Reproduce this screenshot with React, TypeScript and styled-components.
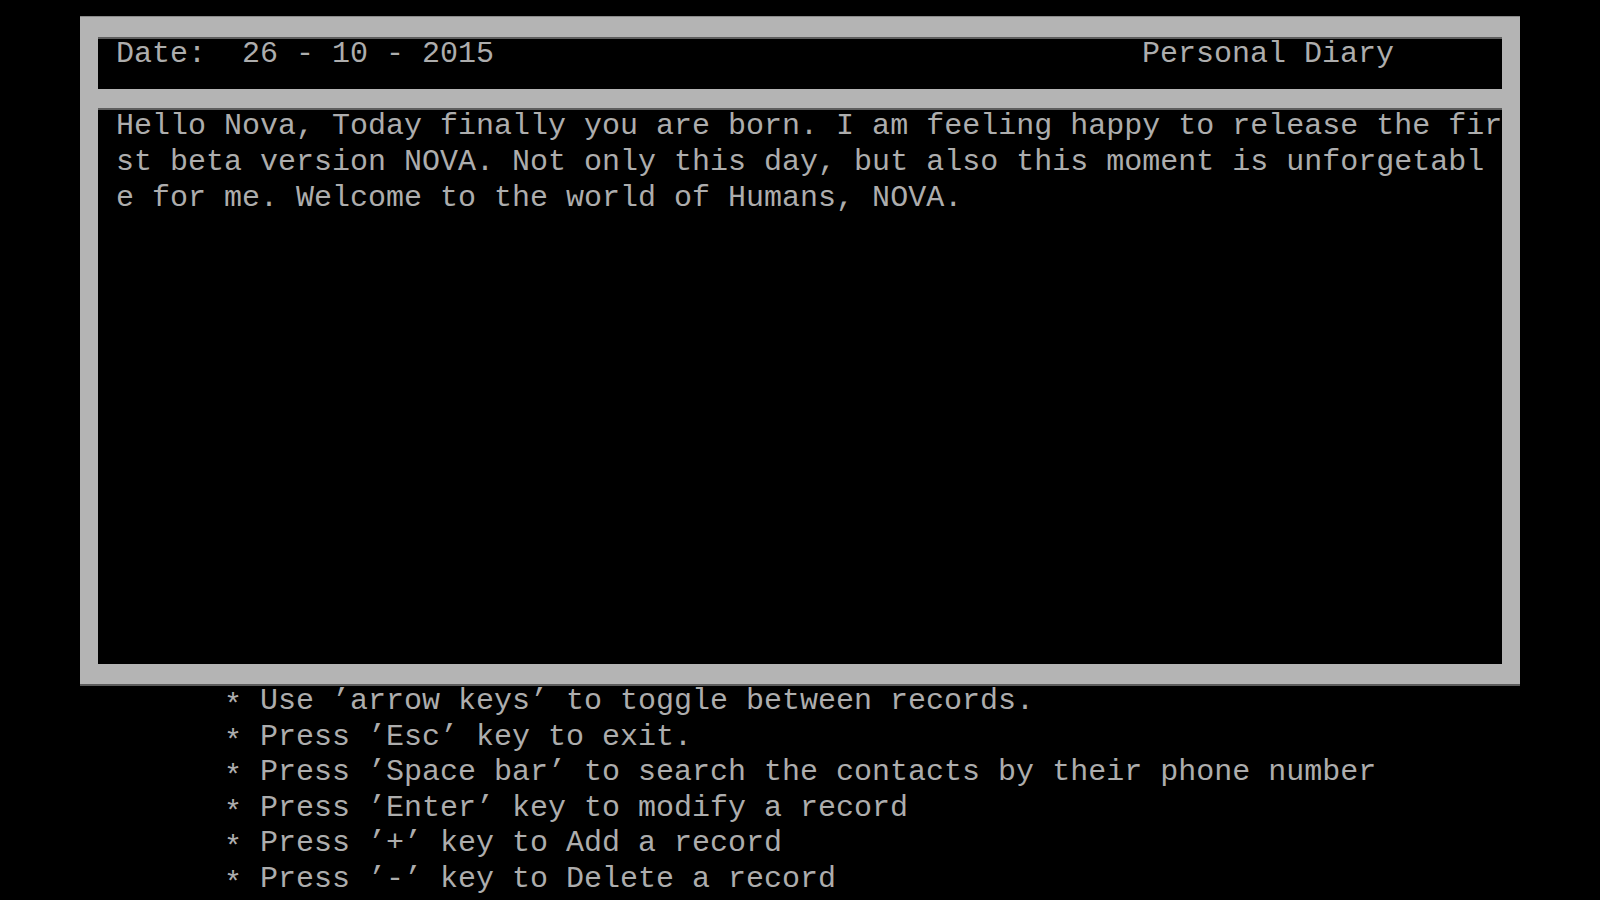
import styled, { createGlobalStyle } from "styled-components";

const GlobalStyle = createGlobalStyle`
  html, body {
    margin: 0;
    padding: 0;
    background: #000;
  }
  body {
    font-family: "Liberation Mono", "DejaVu Sans Mono", monospace;
    font-size: 30px;
    line-height: 36px;
    color: #adadad;
  }
`;

const Screen = styled.div`
  width: 1440px;
  height: 900px;
  margin: 0 auto;
  padding-top: 16px;
  box-sizing: border-box;
  overflow: hidden;
`;

const Frame = styled.div`
  display: flex;
  flex-direction: column;
  gap: 19px;
  padding: 20px 18px;
  background: #b4b4b4;
  border-top: 1px solid #8a8a8a;
  border-bottom: 2px solid #5c5c5c;
`;

const HeaderBox = styled.div`
  display: flex;
  justify-content: space-between;
  height: 52px;
  box-sizing: border-box;
  padding: 0 108px 0 18px;
  background: #000;
  border-top: 2px solid #5e5e5e;
  white-space: pre;
`;

const HeaderText = styled.span`
  margin-top: -3px;
`;

const PageBox = styled.div`
  height: 556px;
  box-sizing: border-box;
  padding: 0 18px;
  background: #000;
  border-top: 2px solid #5e5e5e;
`;

const TextLine = styled.div`
  height: 36px;
  white-space: pre;
  &:first-child {
    margin-top: -2px;
  }
`;

const HelpList = styled.ul`
  list-style: none;
  margin: -2px 0 0;
  padding: 0 0 0 144px;
`;

const HelpItem = styled.li`
  height: 35.5px;
  line-height: 35.5px;
  white-space: pre;
`;

const Bullet = styled.span`
  display: inline-block;
  width: 36px;
  vertical-align: -5px;
`;

const bodyLines = [
  "Hello Nova, Today finally you are born. I am feeling happy to release the fir",
  "st beta version NOVA. Not only this day, but also this moment is unforgetabl",
  "e for me. Welcome to the world of Humans, NOVA.",
];

const helpLines = [
  "Use ’arrow keys’ to toggle between records.",
  "Press ’Esc’ key to exit.",
  "Press ’Space bar’ to search the contacts by their phone number",
  "Press ’Enter’ key to modify a record",
  "Press ’+’ key to Add a record",
  "Press ’-’ key to Delete a record",
];

export default function App() {
  return (
    <>
      <GlobalStyle />
      <Screen>
        <Frame>
          <HeaderBox>
            <HeaderText>Date:  26 - 10 - 2015</HeaderText>
            <HeaderText>Personal Diary</HeaderText>
          </HeaderBox>
          <PageBox>
            {bodyLines.map((line) => (
              <TextLine key={line}>{line}</TextLine>
            ))}
          </PageBox>
        </Frame>
        <HelpList>
          {helpLines.map((line) => (
            <HelpItem key={line}>
              <Bullet>*</Bullet>
              {line}
            </HelpItem>
          ))}
        </HelpList>
      </Screen>
    </>
  );
}
